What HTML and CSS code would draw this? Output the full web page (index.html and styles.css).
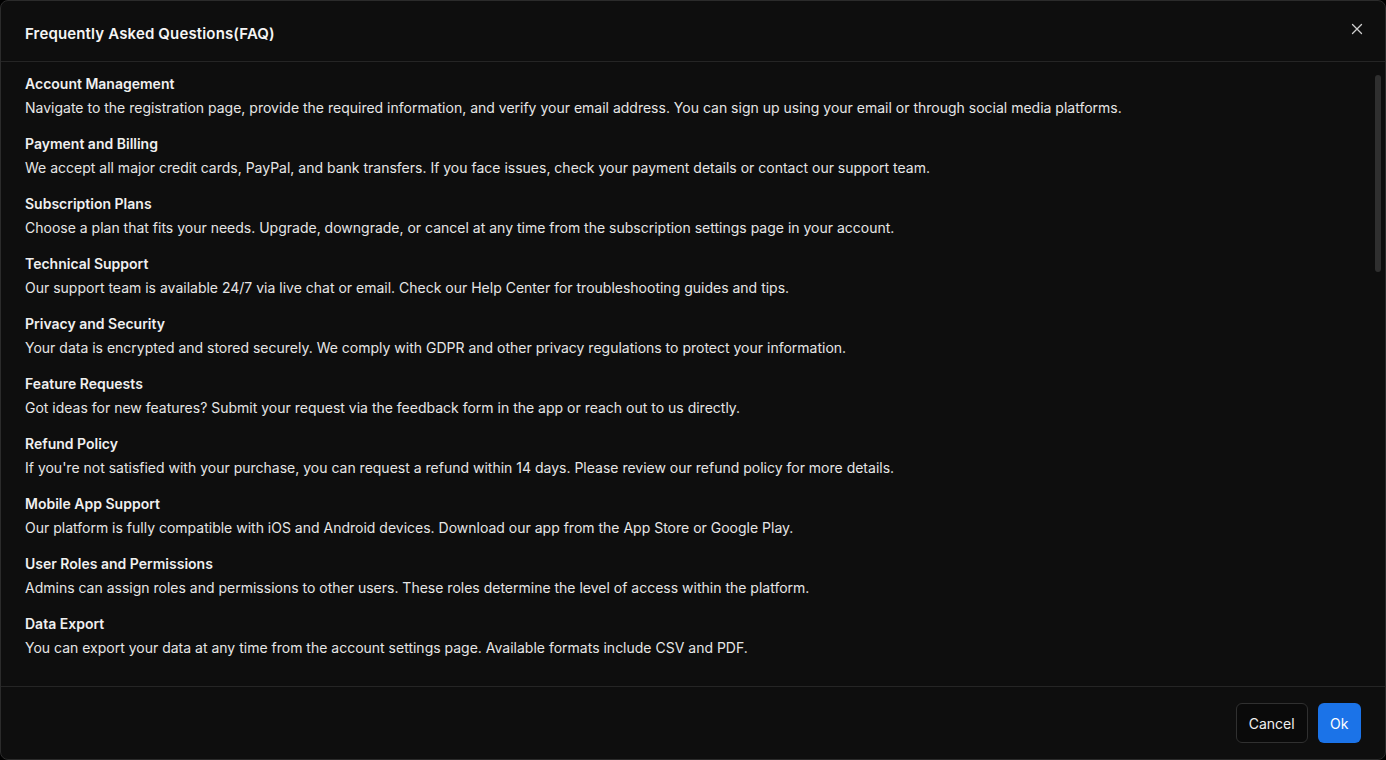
FILE: index.html
```html
<!DOCTYPE html>
<html lang="en">
<head>
<meta charset="utf-8">
<title>Frequently Asked Questions(FAQ)</title>
<link rel="stylesheet" href="styles.css">
</head>
<body>
<div class="modal">
  <header class="modal-header">
    <h1 class="modal-title">Frequently Asked Questions(FAQ)</h1>
    <button class="close-btn" aria-label="Close">
      <svg width="16" height="16" viewBox="0 0 16 16" fill="none" stroke="currentColor" stroke-width="1.3" stroke-linecap="round"><path d="M3.5 3.5l9 9M12.5 3.5l-9 9"/></svg>
    </button>
  </header>
  <div class="modal-body">
    <div class="faq-list">
      <div class="faq-item"><h3 class="faq-q">Account Management</h3><p class="faq-a">Navigate to the registration page, provide the required information, and verify your email address. You can sign up using your email or through social media platforms.</p></div>
      <div class="faq-item"><h3 class="faq-q">Payment and Billing</h3><p class="faq-a">We accept all major credit cards, PayPal, and bank transfers. If you face issues, check your payment details or contact our support team.</p></div>
      <div class="faq-item"><h3 class="faq-q">Subscription Plans</h3><p class="faq-a">Choose a plan that fits your needs. Upgrade, downgrade, or cancel at any time from the subscription settings page in your account.</p></div>
      <div class="faq-item"><h3 class="faq-q">Technical Support</h3><p class="faq-a">Our support team is available 24/7 via live chat or email. Check our Help Center for troubleshooting guides and tips.</p></div>
      <div class="faq-item"><h3 class="faq-q">Privacy and Security</h3><p class="faq-a">Your data is encrypted and stored securely. We comply with GDPR and other privacy regulations to protect your information.</p></div>
      <div class="faq-item"><h3 class="faq-q">Feature Requests</h3><p class="faq-a">Got ideas for new features? Submit your request via the feedback form in the app or reach out to us directly.</p></div>
      <div class="faq-item"><h3 class="faq-q">Refund Policy</h3><p class="faq-a">If you're not satisfied with your purchase, you can request a refund within 14 days. Please review our refund policy for more details.</p></div>
      <div class="faq-item"><h3 class="faq-q">Mobile App Support</h3><p class="faq-a">Our platform is fully compatible with iOS and Android devices. Download our app from the App Store or Google Play.</p></div>
      <div class="faq-item"><h3 class="faq-q">User Roles and Permissions</h3><p class="faq-a">Admins can assign roles and permissions to other users. These roles determine the level of access within the platform.</p></div>
      <div class="faq-item"><h3 class="faq-q">Data Export</h3><p class="faq-a">You can export your data at any time from the account settings page. Available formats include CSV and PDF.</p></div>
    </div>
    <div class="scroll-thumb" aria-hidden="true"></div>
  </div>
  <footer class="modal-footer">
    <button class="btn btn-default">Cancel</button>
    <button class="btn btn-primary">Ok</button>
  </footer>
</div>
</body>
</html>
```

FILE: styles.css
```css
* { box-sizing: border-box; }
html, body {
  margin: 0;
  padding: 0;
  height: 100%;
  background: #000;
}
body {
  font-family: Inter, "Noto Sans", "Liberation Sans", sans-serif;
  color: #f2f2f2;
}
.modal {
  height: 760px;
  width: 1386px;
  display: flex;
  flex-direction: column;
  background: #0e0e0e;
  border: 1px solid #2b2b2b;
  border-radius: 8px;
  overflow: hidden;
}
.modal-header {
  display: flex;
  align-items: center;
  justify-content: space-between;
  padding: 21px 20px 15px 24px;
  border-bottom: 1px solid #252525;
  flex: none;
}
.modal-title {
  margin: 0;
  font-size: 15px;
  line-height: 24px;
  font-weight: 600;
  letter-spacing: 0.15px;
  color: #f5f5f5;
}
.close-btn {
  background: none;
  border: none;
  padding: 0;
  width: 16px;
  height: 16px;
  margin-top: -10px;
  color: #cfcfcf;
  display: flex;
  align-items: center;
  justify-content: center;
  cursor: pointer;
}
.modal-body {
  flex: 1;
  min-height: 0;
  position: relative;
  overflow: hidden;
  padding: 10px 24px;
}
.faq-list {
  display: flex;
  flex-direction: column;
  gap: 12px;
}
.scroll-thumb {
  position: absolute;
  top: 13px;
  right: 4px;
  width: 6px;
  height: 197px;
  border-radius: 3px;
  background: #2f2f2f;
}
.faq-q {
  margin: 0;
  font-size: 14px;
  line-height: 24px;
  font-weight: 600;
  color: #f0f0f0;
}
.faq-a {
  margin: 0;
  font-size: 14px;
  line-height: 24px;
  font-weight: 400;
  color: #e6e6e6;
}
.modal-footer {
  flex: none;
  display: flex;
  justify-content: flex-end;
  gap: 10px;
  padding: 16px 24px;
  border-top: 1px solid #252525;
}
.btn {
  height: 40px;
  padding: 0 12px;
  border-radius: 6px;
  font-family: inherit;
  font-size: 14px;
  font-weight: 400;
  cursor: pointer;
}
.btn-default {
  background: #0a0a0a;
  color: #f0f0f0;
  border: 1px solid #303030;
}
.btn-primary {
  background: #1b73e8;
  color: #fff;
  border: none;
  padding: 0 12.5px;
}
```
